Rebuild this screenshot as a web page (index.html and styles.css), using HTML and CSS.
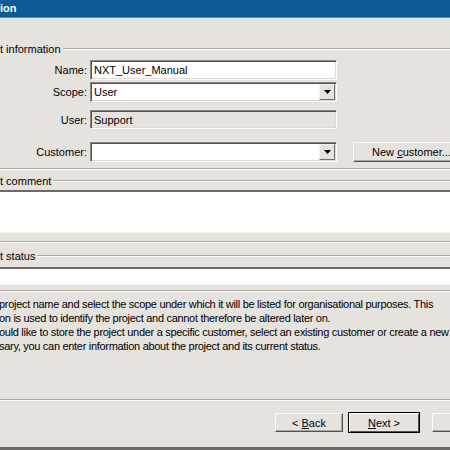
FILE: index.html
```html
<!DOCTYPE html>
<html>
<head>
<meta charset="utf-8">
<link rel="stylesheet" href="styles.css">
</head>
<body>
<div class="window">
  <div class="titlebar">ion</div>
  <div class="body">
    <div class="group group-info">
      <div class="legend"><span class="legend-text">t information</span><span class="etch"></span></div>
      <div class="row row-name">
        <span class="lbl">Name:</span>
        <div class="field">NXT_User_Manual</div>
      </div>
      <div class="row row-scope">
        <span class="lbl">Scope:</span>
        <div class="field combo">User<span class="drop"><svg width="7" height="4" viewBox="0 0 7 4"><path d="M0 0h7L3.5 4z" fill="#000"/></svg></span></div>
      </div>
      <div class="row row-user">
        <span class="lbl">User:</span>
        <div class="field disabled">Support</div>
      </div>
      <div class="row row-cust">
        <span class="lbl">Customer:</span>
        <div class="field combo"><span class="drop"><svg width="7" height="4" viewBox="0 0 7 4"><path d="M0 0h7L3.5 4z" fill="#000"/></svg></span></div>
        <div class="btn btn-new"><span>New <u>c</u>ustomer...</span></div>
      </div>
      <div class="etch group-bottom"></div>
    </div>
    <div class="group group-comment">
      <div class="legend"><span class="legend-text">t comment</span><span class="etch"></span></div>
      <div class="area area-comment"></div>
      <div class="etch group-bottom"></div>
    </div>
    <div class="group group-status">
      <div class="legend"><span class="legend-text">t status</span><span class="etch"></span></div>
      <div class="area area-status"></div>
      <div class="etch group-bottom"></div>
    </div>
    <div class="desc">
      <p>project name and select the scope under which it will be listed for organisational purposes. This</p>
      <p>on is used to identify the project and cannot therefore be altered later on.</p>
      <p>ould like to store the project under a specific customer, select an existing customer or create a new</p>
      <p>sary, you can enter information about the project and its current status.</p>
    </div>
  </div>
  <div class="etch separator"></div>
  <div class="buttons">
    <div class="btn btn-back"><span>&lt; <u>B</u>ack</span></div>
    <div class="btn btn-next"><span><u>N</u>ext &gt;</span></div>
    <div class="btn btn-cancel"></div>
  </div>
  <div class="bottom-border"></div>
</div>
</body>
</html>
```
FILE: styles.css
```css
html, body {
  margin: 0;
  padding: 0;
}
body {
  width: 450px;
  height: 450px;
  overflow: hidden;
  background: #e6e3df;
  font-family: "Liberation Sans", Arial, sans-serif;
  font-size: 11px;
  color: #000;
}
.window {
  width: 450px;
  height: 450px;
  display: flex;
  flex-direction: column;
  overflow: hidden;
}
.titlebar {
  flex: none;
  height: 17px;
  line-height: 16px;
  background: #0d5a95;
  color: #fff;
  font-weight: bold;
  font-size: 11px;
  border-bottom: 1px solid #5c8fbf;
}
.body {
  flex: 1;
  display: flex;
  flex-direction: column;
}
.etch {
  display: block;
  height: 0;
  flex: none;
  border-top: 1px solid #a9a59f;
  border-bottom: 1px solid #fbfaf8;
}
.legend {
  display: flex;
  align-items: center;
  height: 12px;
}
.legend-text {
  padding-right: 2px;
  white-space: nowrap;
}
.legend .etch {
  flex: 1;
}
.group-info {
  margin-top: 25px;
}
.group-info .legend {
  margin-bottom: 5px;
}
.row {
  display: flex;
  align-items: center;
  height: 20px;
}
.row-scope { margin-top: 2px; }
.row-user { margin-top: 8px; height: 19px; }
.row-cust { margin-top: 13px; }
.lbl {
  flex: none;
  width: 90px;
  text-align: right;
  padding-right: 3px;
  box-sizing: border-box;
}
.field {
  flex: none;
  position: relative;
  width: 247px;
  height: 20px;
  box-sizing: border-box;
  background: #fff;
  border: 1px solid;
  border-color: #8a8782 #fbfaf8 #fbfaf8 #8a8782;
  box-shadow: inset 1px 1px 0 #55524e, inset -1px -1px 0 #dedad4;
  padding: 3px 0 0 3px;
  line-height: 13px;
  white-space: nowrap;
}
.field.disabled {
  background: #e6e3df;
  height: 19px;
}
.drop {
  position: absolute;
  right: 1px;
  top: 1px;
  width: 16px;
  height: 16px;
  box-sizing: border-box;
  background: #e6e3df;
  border: 1px solid;
  border-color: #f4f2ef #6f6c68 #6f6c68 #f4f2ef;
  display: flex;
  align-items: center;
  justify-content: center;
}
.btn {
  flex: none;
  box-sizing: border-box;
  height: 20px;
  background: #e6e3df;
  border: 1px solid;
  border-color: #fbfaf8 #56534f #56534f #fbfaf8;
  box-shadow: inset -1px -1px 0 #a9a59f;
  display: flex;
  align-items: center;
  justify-content: center;
  white-space: nowrap;
}
.btn-new {
  margin-left: 16px;
  width: 117px;
}
.group-bottom {
  margin-top: 6px;
}
.group-comment {
  margin-top: 5px;
}
.area {
  background: #fff;
  border-top: 2px solid #6d6a66;
  border-bottom: 1px solid #f4f2ef;
}
.area-comment {
  margin-top: 3px;
  height: 40px;
}
.group-comment .group-bottom {
  margin-top: 8px;
}
.group-status {
  margin-top: 7px;
}
.area-status {
  margin-top: 5px;
  height: 15px;
}
.group-status .group-bottom {
  margin-top: 5px;
}
.desc {
  margin-top: 5px;
  margin-left: -1px;
  letter-spacing: -0.3px;
}
.desc p {
  margin: 0;
  line-height: 14px;
  white-space: nowrap;
}
.separator {
  margin-bottom: 11px;
}
.buttons {
  flex: none;
  display: flex;
  height: 20px;
  padding-left: 275px;
}
.btn-back {
  width: 68px;
  height: 19px;
  margin-top: 1px;
}
.btn-next {
  width: 72px;
  height: 21px;
  margin-left: 5px;
  border: 1px solid #000;
  box-shadow: inset 1px 1px 0 #fbfaf8, inset -1px -1px 0 #56534f;
}
.btn-cancel {
  width: 68px;
  margin-left: 12px;
  height: 19px;
  margin-top: 1px;
}
.bottom-border {
  flex: none;
  margin-top: 15px;
  height: 3px;
  background: #6d6a66;
}
```
